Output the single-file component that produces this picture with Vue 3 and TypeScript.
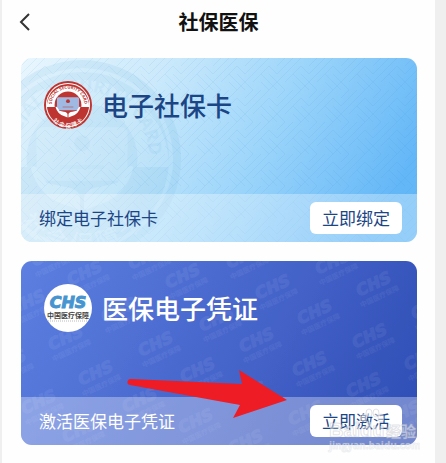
<script setup lang="ts">
interface Mark {
  x: number
  y: number
}

const cardMarks: Mark[] = [
  { x: 29, y: -4 }, { x: 126, y: -1 }, { x: 224, y: -2 }, { x: 313, y: 4 },
  { x: 65, y: 15 }, { x: 163, y: 18 }, { x: 253, y: 29 }, { x: 354, y: 26 },
  { x: 8, y: 44 }, { x: 99, y: 52 }, { x: 197, y: 61 }, { x: 295, y: 54 },
  { x: 46, y: 80 }, { x: 136, y: 86 }, { x: 237, y: 82 }, { x: 350, y: 78 },
  { x: -11, y: 104 }, { x: 76, y: 115 }, { x: 178, y: 112 }, { x: 290, y: 106 },
  { x: 409, y: 49 }, { x: 402, y: 100 }, { x: 19, y: 144 }, { x: 120, y: 142 },
  { x: 229, y: 136 }, { x: 344, y: 127 }, { x: 60, y: 172 }, { x: 176, y: 163 },
  { x: 286, y: 155 }, { x: 383, y: 155 }, { x: 226, y: 184 },
]
</script>

<template>
  <main class="page">
    <svg class="defs" aria-hidden="true">
      <symbol id="seal" viewBox="0 0 100 100">
        <circle class="ink" cx="50" cy="50" r="50" />
        <circle class="paper" cx="50" cy="50" r="46" />
        <circle class="ink" cx="50" cy="50" r="44" />
        <path class="paper" d="M6 54 A44 44 0 0 1 94 54 Z" />
        <circle class="ink" cx="50" cy="50" r="28" />
        <path id="seal-top" d="M17 58 A34 34 0 1 1 83 58" fill="none" />
        <path id="seal-bottom" d="M8 55 A42 42 0 0 0 92 55" fill="none" />
        <text class="seal-en"><textPath href="#seal-top" startOffset="50%" text-anchor="middle">SOCIAL SECURITY CARD</textPath></text>
        <text class="seal-cn"><textPath href="#seal-bottom" startOffset="50%" text-anchor="middle">社 会 保 障 卡</textPath></text>
        <rect class="chip" x="27" y="34" width="46" height="27" rx="3" />
        <circle class="ink" cx="50" cy="42" r="4" />
        <path class="ink" d="M39 53h22v2H39z" opacity=".5" />
        <path class="paper" d="M24 54 C27 52 29 57 32 62 L41 64 Q49 65 49 70 L49 76 L44 74 Q28 70 24 54Z M76 54 C73 52 71 57 68 62 L59 64 Q51 65 51 70 L51 76 L56 74 Q72 70 76 54Z" />
      </symbol>
      <symbol id="chs" viewBox="-26 -16 52 32" overflow="visible">
        <text class="chs-en" y="2" text-anchor="middle">CHS</text>
        <text class="chs-cn" y="13" text-anchor="middle">中国医疗保障</text>
      </symbol>
    </svg>

    <header class="bar">
      <button class="back" type="button" aria-label="返回">
        <svg width="12" height="18" viewBox="0 0 12 18"><path d="M10 1 L2 9 L10 17" fill="none" stroke="#333" stroke-width="2" /></svg>
      </button>
      <h1>社保医保</h1>
    </header>

    <div class="cards">
      <section class="card social">
        <svg class="backdrop" aria-hidden="true">
          <defs>
            <pattern id="weave" width="32" height="32" patternUnits="userSpaceOnUse">
              <path d="M0 16 L16 0 M0 24 L24 0 M8 24 L24 8 M16 16 L32 32 M24 16 L32 24 M0 24 L8 32 M16 24 L24 32 M24 8 L32 16 M0 8 L8 0 M24 32 L32 24" />
            </pattern>
          </defs>
          <rect class="weave" width="100%" height="100%" fill="url(#weave)" />
          <use class="seal-ghost" href="#seal" x="-38" y="2" width="198" height="198" />
        </svg>
        <div class="head">
          <svg class="logo seal-logo" viewBox="0 0 100 100" aria-hidden="true"><use href="#seal" width="100" height="100" /></svg>
          <h2>电子社保卡</h2>
        </div>
        <div class="foot">
          <p>绑定电子社保卡</p>
          <button class="action" type="button">立即绑定</button>
        </div>
      </section>

      <div class="stack">
        <section class="card medical">
          <svg class="backdrop marks" aria-hidden="true">
            <g v-for="(mark, i) in cardMarks" :key="i" :transform="`translate(${mark.x} ${mark.y}) rotate(-25)`">
              <use href="#chs" x="-26" y="-16" width="52" height="32" />
            </g>
          </svg>
          <div class="head">
            <svg class="logo chs-logo" viewBox="-24 -24 48 48" aria-hidden="true">
              <circle r="24" fill="#fff" />
              <text class="chs-en" y="0" text-anchor="middle">CHS</text>
              <text class="chs-cn" y="10" text-anchor="middle">中国医疗保障</text>
              <path d="M-20 13 H20" stroke="#bbb" stroke-width="1" stroke-dasharray="1 1" />
            </svg>
            <h2>医保电子凭证</h2>
          </div>
          <div class="foot">
            <p>激活医保电子凭证</p>
            <button class="action" type="button">立即激活</button>
          </div>
        </section>
        <svg class="arrow" width="160" height="50" viewBox="0 0 160 50" aria-hidden="true">
          <path d="M4 9 L115 14 L112 0 L160 30 L106 48 L113 35 L3 15 A3 3 0 0 1 4 9Z" fill="#ee1c24" />
        </svg>
        <svg class="stamp" width="94" height="48" viewBox="0 0 94 48" aria-hidden="true">
          <g class="paw">
            <ellipse cx="38" cy="13" rx="3" ry="4" />
            <ellipse cx="43" cy="8" rx="3" ry="4" />
            <ellipse cx="50" cy="8" rx="3" ry="4" />
            <ellipse cx="55" cy="13" rx="3" ry="4" />
          </g>
          <text class="brand" x="3" y="32">Baidu</text>
          <text class="brand-cn" x="60" y="32">经验</text>
          <text class="site" x="3" y="44">jingyan.baidu.com</text>
        </svg>
      </div>
    </div>
  </main>
</template>

<style>
body {
  background: #efefef;
}
</style>

<style scoped>
.page {
  box-sizing: border-box;
  min-height: 100vh;
  margin: 0 11px 0 2px;
  background: #fefefe;
  font-family: "Noto Sans CJK SC", sans-serif;
}
.defs {
  position: absolute;
  width: 0;
  height: 0;
}
.bar {
  display: grid;
  grid-template-columns: 48px 1fr 48px;
  align-items: center;
  height: 44px;
}
.back {
  display: flex;
  padding: 0 0 0 17px;
  border: 0;
  background: none;
}
h1,
h2,
p {
  margin: 0;
}
h1 {
  color: #111;
  font-size: 20px;
  line-height: 28px;
  font-weight: 700;
  text-align: center;
}
.cards {
  display: flex;
  flex-direction: column;
  gap: 19px;
  padding: 14px 18px 16px 19px;
}
.stack {
  position: relative;
}
.card {
  position: relative;
  overflow: hidden;
  border-radius: 11px;
}
.social {
  background: linear-gradient(118deg, #e9f6fe 0%, #cbe9fb 30%, #9cd5fa 58%, #64b7f7 90%);
  color: #1b4585;
}
.medical {
  background: linear-gradient(118deg, #5d80e1 0%, #4664ca 55%, #2e4db4 100%);
  color: #fff;
}
.backdrop {
  position: absolute;
  inset: 0;
  width: 100%;
  height: 100%;
}
.weave {
  opacity: 0.08;
}
#weave path {
  fill: none;
  stroke: #2a7fd0;
  stroke-width: 1;
}
.head {
  position: relative;
  display: flex;
  align-items: center;
  gap: 10px;
  height: 94px;
  padding: 0 23px 42px;
}
.logo {
  flex: none;
  width: 48px;
  height: 48px;
}
h2 {
  font-size: 26px;
  line-height: 36px;
  font-weight: 500;
}
.foot {
  position: relative;
  display: flex;
  align-items: center;
  justify-content: space-between;
  height: 48px;
  padding: 0 15px 0 18px;
  background: rgba(255, 255, 255, 0.32);
}
.foot p {
  font-size: 17px;
  line-height: 24px;
}
.action {
  height: 32px;
  padding: 0 12px;
  border: 0;
  border-radius: 6px;
  background: #fff;
  color: #1b4585;
  font-family: inherit;
  font-size: 17px;
  line-height: 24px;
}
.ink {
  fill: var(--ink);
}
.paper {
  fill: var(--paper);
}
.chip {
  fill: var(--chip);
}
.seal-en {
  fill: var(--ink);
  font: 700 9px "Open Sans", sans-serif;
}
.seal-cn {
  fill: var(--paper);
  font-size: 12px;
  font-weight: 500;
}
.seal-logo {
  --ink: #bd3431;
  --paper: #fff;
  --chip: #9fb9e2;
}
.seal-ghost {
  --ink: #74b8e0;
  --paper: #b4dcf3;
  --chip: #a0d0ec;
  opacity: 0.16;
}
.chs-en {
  fill: #4795d0;
  stroke: #4795d0;
  stroke-width: 1;
  font: italic 700 16px "DejaVu Sans", sans-serif;
}
.chs-cn {
  fill: #444;
  font-size: 7px;
  font-weight: 700;
}
.marks {
  opacity: 0.06;
}
#chs text {
  fill: #fff;
}
#chs .chs-en {
  stroke: #fff;
}
.arrow {
  position: absolute;
  right: 130px;
  bottom: 25px;
}
.stamp {
  position: absolute;
  right: -3px;
  bottom: -8px;
  fill: #fff;
  fill-opacity: 0.5;
  stroke: #a9aeb8;
  stroke-opacity: 0.35;
  stroke-width: 1;
  pointer-events: none;
}
.brand {
  font: 700 20px "Liberation Sans", sans-serif;
}
.brand-cn {
  font-size: 15px;
  font-weight: 700;
}
.site {
  font: 700 10px "Open Sans", sans-serif;
  stroke-opacity: 0.2;
}
</style>
